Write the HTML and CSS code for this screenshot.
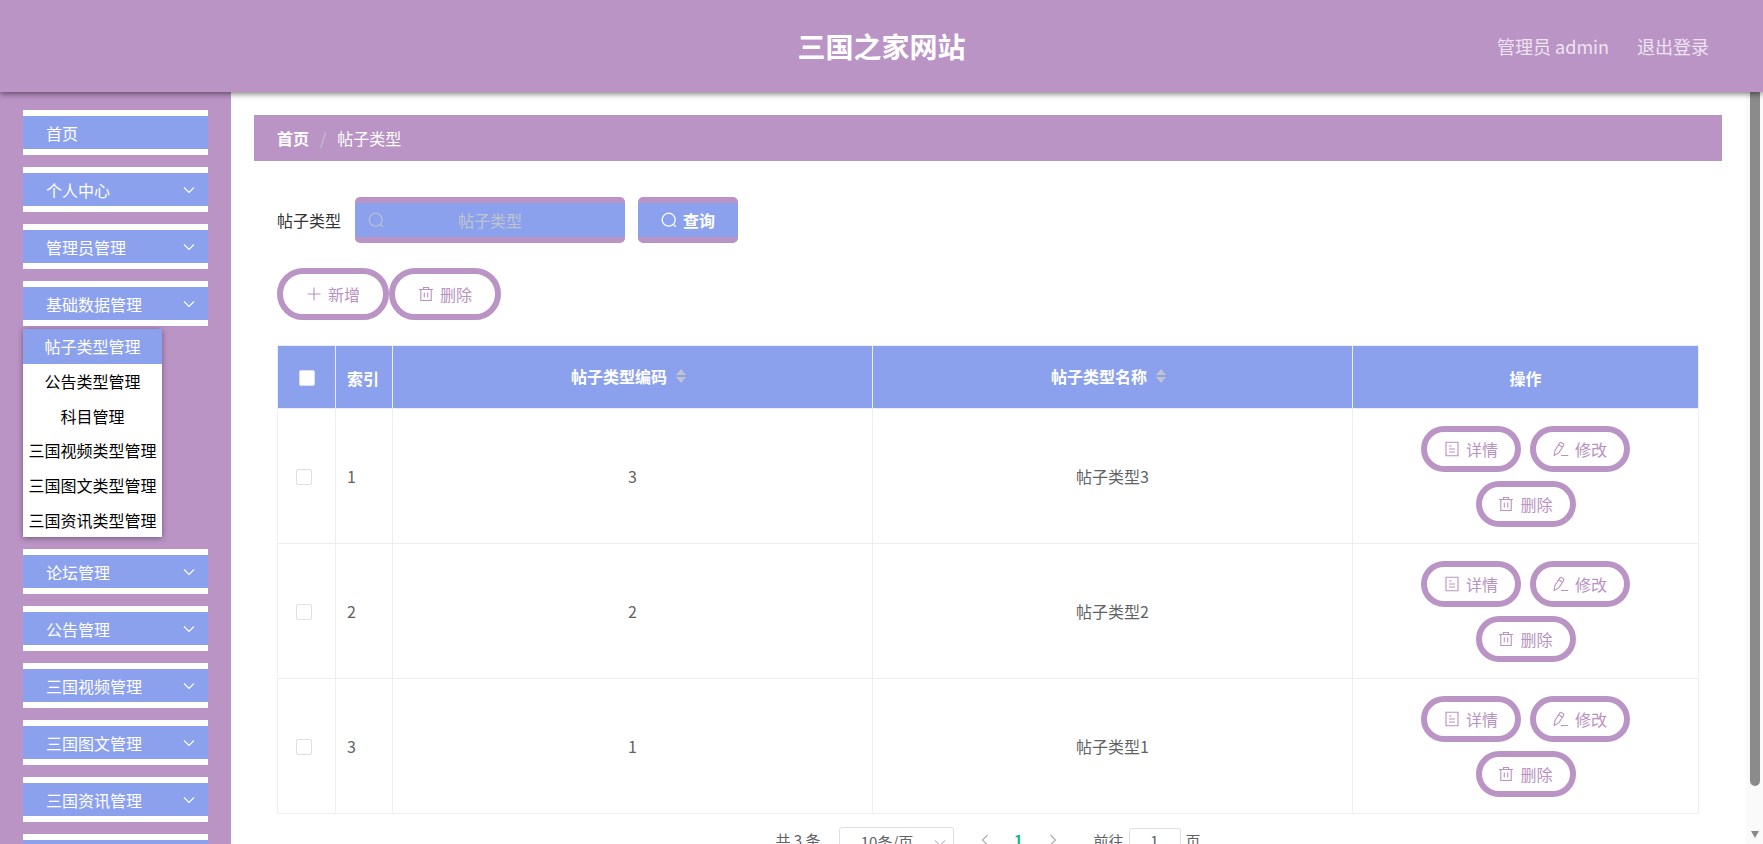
FILE: index.html
```html
<!DOCTYPE html>
<html lang="zh-CN">

<head>
    <meta charset="UTF-8">
    <title>三国之家网站</title>
    <link rel="stylesheet" href="styles.css">
</head>

<body>
    <!--图标-->
    <svg class="symbols">
        <symbol id="arrow" viewBox="0 0 16 16"><path d="M3 5.5l5 5 5-5" /></symbol>
        <symbol id="search" viewBox="0 0 16 16"><circle cx="7.7" cy="7.7" r="6.5" /><path d="M12.4 12.4l2.4 2.4" /></symbol>
        <symbol id="plus" viewBox="0 0 16 16"><path d="M8 1.5v13M1.5 8h13" /></symbol>
        <symbol id="trash" viewBox="0 0 16 16"><path d="M1 3.5h14M2.8 3.5v11h10.4v-11M5.5 3.5v-2h5v2M6.3 6.5v5M9.7 6.5v5" /></symbol>
        <symbol id="doc" viewBox="0 0 16 16"><path d="M2 1.2h12v13.6H2zM5 5h2.5M5 8h6M5 11h6" /></symbol>
        <symbol id="edit" viewBox="0 0 16 16"><path d="M1.2 14.5l.8-5L6.7 2q.7-1 1.7-.4l1.9 1.2q1 .7.3 1.7L5.8 11.9zM5.6 3.8l3.8 2.5M8 14.5h7.2" /></symbol>
    </svg>

    <!--头部-->
    <header class="header">
        <h1 class="title">三国之家网站</h1>
        <div class="user">
            <span>管理员 admin</span>
            <a href="#">退出登录</a>
        </div>
    </header>

    <div class="wrap">
        <!--侧边菜单-->
        <nav class="side">
            <a class="menu" href="#">首页</a>
            <a class="menu" href="#">个人中心<svg class="icon"><use href="#arrow" /></svg></a>
            <a class="menu" href="#">管理员管理<svg class="icon"><use href="#arrow" /></svg></a>
            <a class="menu" href="#">基础数据管理<svg class="icon"><use href="#arrow" /></svg></a>
            <div class="submenu">
                <a class="active" href="#">帖子类型管理</a>
                <a href="#">公告类型管理</a>
                <a href="#">科目管理</a>
                <a href="#">三国视频类型管理</a>
                <a href="#">三国图文类型管理</a>
                <a href="#">三国资讯类型管理</a>
            </div>
            <a class="menu" href="#">论坛管理<svg class="icon"><use href="#arrow" /></svg></a>
            <a class="menu" href="#">公告管理<svg class="icon"><use href="#arrow" /></svg></a>
            <a class="menu" href="#">三国视频管理<svg class="icon"><use href="#arrow" /></svg></a>
            <a class="menu" href="#">三国图文管理<svg class="icon"><use href="#arrow" /></svg></a>
            <a class="menu" href="#">三国资讯管理<svg class="icon"><use href="#arrow" /></svg></a>
            <a class="menu" href="#"></a>
        </nav>

        <!--内容-->
        <main class="main">
            <div class="crumb">
                <a href="#">首页</a>
                <i>/</i>
                <span>帖子类型</span>
            </div>
            <div class="content">
                <form class="search">
                    <label for="type">帖子类型</label>
                    <div class="field">
                        <svg class="icon"><use href="#search" /></svg>
                        <input id="type" type="text" placeholder="帖子类型">
                    </div>
                    <button class="query" type="button"><svg class="icon"><use href="#search" /></svg>查询</button>
                </form>
                <div class="tools">
                    <button class="btn big" type="button"><svg class="icon"><use href="#plus" /></svg>新增</button>
                    <button class="btn big" type="button"><svg class="icon"><use href="#trash" /></svg>删除</button>
                </div>

                <!--表格-->
                <table class="table">
                    <colgroup>
                        <col class="col-check">
                        <col class="col-index">
                        <col>
                        <col>
                        <col class="col-ops">
                    </colgroup>
                    <thead>
                        <tr>
                            <th><input type="checkbox" aria-label="全选"></th>
                            <th class="left">索引</th>
                            <th><div class="sort">帖子类型编码<span class="caret"></span></div></th>
                            <th><div class="sort">帖子类型名称<span class="caret"></span></div></th>
                            <th>操作</th>
                        </tr>
                    </thead>
                    <tbody>
                        <tr>
                            <td class="check"><input type="checkbox" aria-label="选择1"></td>
                            <td class="left">1</td>
                            <td>3</td>
                            <td>帖子类型3</td>
                            <td>
                                <div class="ops">
                                    <button class="btn" type="button"><svg class="icon"><use href="#doc" /></svg>详情</button>
                                    <button class="btn" type="button"><svg class="icon"><use href="#edit" /></svg>修改</button>
                                    <button class="btn" type="button"><svg class="icon"><use href="#trash" /></svg>删除</button>
                                </div>
                            </td>
                        </tr>
                        <tr>
                            <td class="check"><input type="checkbox" aria-label="选择2"></td>
                            <td class="left">2</td>
                            <td>2</td>
                            <td>帖子类型2</td>
                            <td>
                                <div class="ops">
                                    <button class="btn" type="button"><svg class="icon"><use href="#doc" /></svg>详情</button>
                                    <button class="btn" type="button"><svg class="icon"><use href="#edit" /></svg>修改</button>
                                    <button class="btn" type="button"><svg class="icon"><use href="#trash" /></svg>删除</button>
                                </div>
                            </td>
                        </tr>
                        <tr>
                            <td class="check"><input type="checkbox" aria-label="选择3"></td>
                            <td class="left">3</td>
                            <td>1</td>
                            <td>帖子类型1</td>
                            <td>
                                <div class="ops">
                                    <button class="btn" type="button"><svg class="icon"><use href="#doc" /></svg>详情</button>
                                    <button class="btn" type="button"><svg class="icon"><use href="#edit" /></svg>修改</button>
                                    <button class="btn" type="button"><svg class="icon"><use href="#trash" /></svg>删除</button>
                                </div>
                            </td>
                        </tr>
                    </tbody>
                </table>

                <!--分页-->
                <div class="pages">
                    <span>共 3 条</span>
                    <div class="size">
                        <select aria-label="每页条数">
                            <option>10条/页</option>
                        </select>
                        <svg class="icon"><use href="#arrow" /></svg>
                    </div>
                    <button class="prev" type="button" aria-label="上一页"><svg class="icon"><use href="#arrow" /></svg></button>
                    <button class="num" type="button">1</button>
                    <button class="next" type="button" aria-label="下一页"><svg class="icon"><use href="#arrow" /></svg></button>
                    <label class="jump">前往<input type="text" value="1">页</label>
                </div>
            </div>
        </main>

        <!--滚动条-->
        <div class="scroll">
            <div class="thumb"></div>
            <div class="down"></div>
        </div>
    </div>
</body>

</html>
```
FILE: styles.css
```css
* {
    box-sizing: border-box;
}

body {
    margin: 0;
    height: 100vh;
    overflow: hidden;
    display: flex;
    flex-direction: column;
    background: #fff;
    color: #333;
    font-family: "Noto Sans CJK SC", sans-serif;
    font-size: 16px;
    line-height: 24px;
}

a {
    color: inherit;
    text-decoration: none;
}

button,
input,
select {
    font: inherit;
    margin: 0;
}

button {
    cursor: pointer;
}

.symbols {
    display: none;
}

.icon {
    width: 16px;
    height: 16px;
    fill: none;
    stroke: currentColor;
    stroke-width: 1.1;
    flex: none;
}

/*头部*/
.header {
    flex: none;
    height: 92px;
    padding: 0 54px;
    display: grid;
    grid-template-columns: 1fr auto 1fr;
    align-items: center;
    background: #bb94c6;
    box-shadow: 0 2px 6px rgba(0, 0, 0, 0.5);
    position: relative;
    z-index: 1;
}

.title {
    grid-column: 2;
    margin: 0;
    color: #fff;
    font-size: 28px;
    line-height: 40px;
}

.user {
    display: flex;
    justify-content: flex-end;
    gap: 28px;
    color: #eee3f1;
    font-size: 18px;
}

.wrap {
    flex: 1;
    min-height: 0;
    display: flex;
}

/*侧边菜单*/
.side {
    flex: none;
    width: 231px;
    padding: 18px 23px 0;
    background: #bb94c6;
    overflow: hidden;
}

.menu {
    display: flex;
    align-items: center;
    justify-content: space-between;
    height: 45px;
    padding: 0 11px 0 23px;
    margin-bottom: 12px;
    background: #8ca1ee;
    border-top: 6px solid #fff;
    border-bottom: 6px solid #fff;
    color: #fff;
}

.submenu {
    display: flex;
    flex-direction: column;
    width: 139px;
    height: 208px;
    margin: -9px 0 12px;
    background: #fff;
    box-shadow: 0 1px 6px rgba(0, 0, 0, 0.4);
    color: #000;
}

.submenu a {
    flex: 1;
    display: flex;
    align-items: center;
    justify-content: center;
}

.submenu .active {
    background: #8ca1ee;
    color: #fff;
}

/*内容*/
.main {
    flex: 1;
    min-width: 0;
    padding: 23px 24px 0 23px;
    overflow: hidden;
}

.crumb {
    display: flex;
    align-items: center;
    gap: 11px;
    height: 46px;
    padding: 0 23px;
    background: #bb94c6;
    color: #fff;
}

.crumb a {
    font-weight: bold;
}

.crumb i {
    color: #c0c4cc;
    font-style: normal;
}

.content {
    padding: 36px 23px 0;
}

.search {
    display: flex;
    align-items: center;
}

.field {
    display: flex;
    align-items: center;
    width: 270px;
    height: 46px;
    margin: 0 13px 0 14px;
    padding: 0 13px;
    background: #8ca1ee;
    border-top: 6px solid #bb94c6;
    border-bottom: 6px solid #bb94c6;
    border-radius: 5px;
    color: #c0c4cc;
}

.field input {
    flex: 1;
    min-width: 0;
    padding: 0 16px 0 0;
    border: 0;
    outline: 0;
    background: none;
    color: #fff;
    text-align: center;
}

.field input::placeholder {
    color: #c0c4cc;
}

.query {
    display: flex;
    align-items: center;
    justify-content: center;
    gap: 6px;
    width: 100px;
    height: 46px;
    padding: 0;
    background: #8ca1ee;
    border: 0 solid #bb94c6;
    border-width: 6px 0;
    border-radius: 5px;
    color: #fff;
    font-weight: bold;
}

.query .icon {
    stroke-width: 1.3;
}

.tools {
    display: flex;
    margin: 25px 0;
}

.btn {
    display: flex;
    align-items: center;
    justify-content: center;
    gap: 6px;
    width: 100px;
    height: 46px;
    padding: 0;
    background: #fff;
    border: 6px solid #bb94c6;
    border-radius: 26px;
    color: #b892c2;
}

.btn.big {
    width: 112px;
    height: 52px;
}

/*表格*/
.table {
    width: 100%;
    table-layout: fixed;
    border-collapse: collapse;
    color: #606266;
    text-align: center;
}

.col-check {
    width: 58px;
}

.col-index {
    width: 57px;
}

.col-ops {
    width: 346px;
}

.table th,
.table td {
    padding: 0;
    border: 1px solid #ebeef5;
}

.table th {
    height: 63px;
    padding-top: 2px;
    background: #8ca1ee;
    color: #fff;
}

.table td {
    height: 135px;
}

.table .left {
    padding-left: 11px;
    text-align: left;
}

.table .check {
    padding: 2px 5px 0 0;
}

.table input {
    appearance: none;
    display: block;
    width: 16px;
    height: 16px;
    margin: 0 auto;
    background: #fff;
    border: 1px solid #dcdfe6;
    border-radius: 2px;
}

.sort {
    display: flex;
    align-items: center;
    justify-content: center;
    gap: 9px;
    padding: 0 8px 5px 0;
}

.caret::before,
.caret::after {
    content: '';
    display: block;
    border: 5px solid transparent;
}

.caret::before {
    border-top: 0;
    border-bottom: 6px solid #c0c4cc;
    margin-bottom: 2px;
}

.caret::after {
    border-bottom: 0;
    border-top: 6px solid #c0c4cc;
}

.ops {
    display: flex;
    flex-wrap: wrap;
    justify-content: center;
    gap: 9px;
    padding: 0 50px;
}

/*分页*/
.pages {
    display: flex;
    align-items: flex-start;
    justify-content: center;
    margin-top: 13px;
    color: #606266;
    font-size: 15px;
    line-height: 26px;
}

.size {
    position: relative;
    margin: 0 14px 0 18px;
}

.size select {
    appearance: none;
    display: block;
    width: 115px;
    height: 30px;
    padding: 0 18px 0 0;
    background: #fff;
    border: 1px solid #dcdfe6;
    border-radius: 3px;
    color: #606266;
    text-align: center;
    text-align-last: center;
}

.size .icon {
    position: absolute;
    right: 6px;
    top: 8px;
    color: #c0c4cc;
}

.pages button {
    display: flex;
    align-items: center;
    justify-content: center;
    width: 34px;
    height: 26px;
    padding: 0;
    background: none;
    border: 0;
    color: #a8abb2;
}

.prev .icon {
    transform: rotate(90deg);
}

.next .icon {
    transform: rotate(-90deg);
}

.pages .num {
    color: #18b48a;
    font-weight: bold;
}

.jump {
    display: flex;
    align-items: center;
    gap: 5px;
    height: 28px;
    margin-left: 24px;
}

.jump input {
    width: 52px;
    height: 26px;
    padding: 0;
    border: 1px solid #dcdfe6;
    border-radius: 3px;
    color: #606266;
    text-align: center;
}

/*滚动条*/
.scroll {
    flex: none;
    display: flex;
    flex-direction: column;
    align-items: center;
    justify-content: space-between;
    width: 17px;
    padding-bottom: 6px;
    background: #fafafa;
}

.thumb {
    width: 10px;
    height: 93%;
    background: #8b8b8b;
    border-radius: 0 0 5px 5px;
}

.down {
    border: 4px solid transparent;
    border-top: 7px solid #8b8b8b;
    border-bottom: 0;
}
```
